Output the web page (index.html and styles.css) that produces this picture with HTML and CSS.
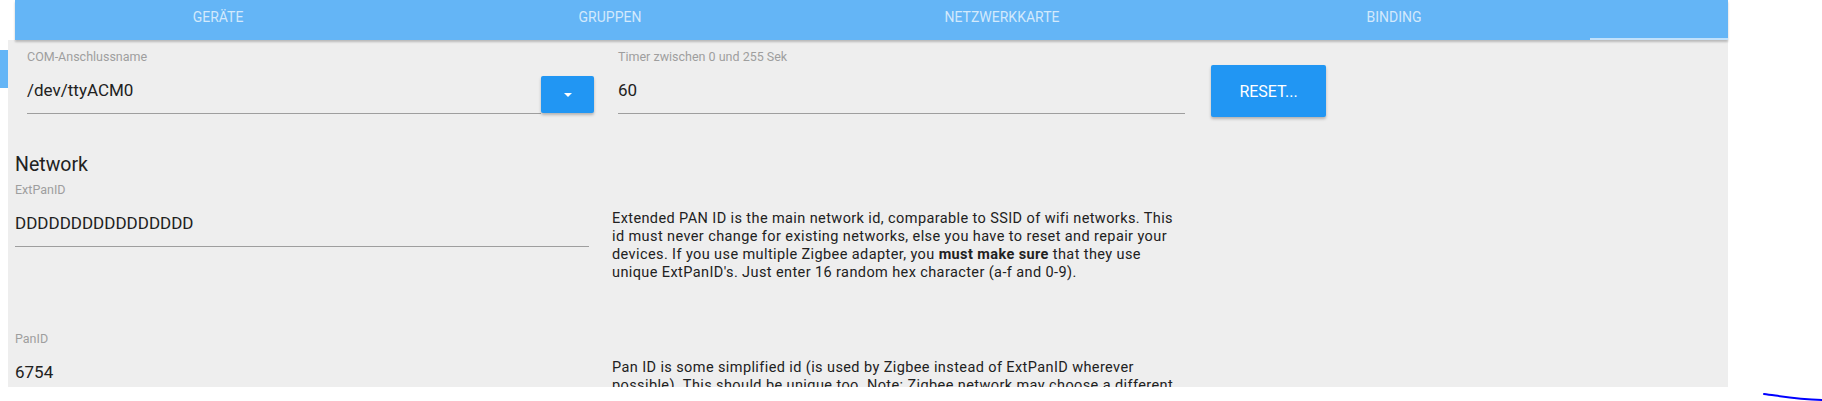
FILE: index.html
```html
<!DOCTYPE html>
<html lang="de">

<head>
    <meta charset="UTF-8">
    <meta name="viewport" content="width=device-width, initial-scale=1.0">
    <title>Zigbee Einstellungen</title>
    <link rel="stylesheet" href="styles.css">
</head>

<body>
    <div class="page">
        <div class="side">
            <div class="side-btn"></div>
        </div>
        <div class="main">
            <div class="tabs">
                <div class="tab">Geräte</div>
                <div class="tab">Gruppen</div>
                <div class="tab">Netzwerkkarte</div>
                <div class="tab">Binding</div>
                <div class="tab active" title="Einstellungen"></div>
            </div>

            <div class="panel">
                <!-- port / timer / reset -->
                <div class="top-row">
                    <div class="port">
                        <div class="field port-field">
                            <div class="field-label">COM-Anschlussname</div>
                            <div class="field-value">/dev/ttyACM0</div>
                        </div>
                        <button class="drop-btn"><span class="caret"></span></button>
                    </div>
                    <div class="field timer-field">
                        <div class="field-label">Timer zwischen 0 und 255 Sek</div>
                        <div class="field-value">60</div>
                    </div>
                    <div>
                        <button class="reset-btn">Reset...</button>
                    </div>
                </div>

                <h3 class="section-title">Network</h3>

                <div class="net-row">
                    <div class="field net-field">
                        <div class="field-label">ExtPanID</div>
                        <div class="field-value">DDDDDDDDDDDDDDDD</div>
                    </div>
                    <div class="desc">
                        Extended PAN ID is the main network id, comparable to SSID of wifi networks. This<br>
                        id must never change for existing networks, else you have to reset and repair your<br>
                        devices. If you use multiple Zigbee adapter, you <b>must make sure</b> that they use<br>
                        unique ExtPanID's. Just enter 16 random hex character (a-f and 0-9).
                    </div>
                </div>

                <div class="net-row">
                    <div class="field net-field">
                        <div class="field-label">PanID</div>
                        <div class="field-value">6754</div>
                    </div>
                    <div class="desc">
                        Pan ID is some simplified id (is used by Zigbee instead of ExtPanID wherever<br>
                        possible). This should be unique too. Note: Zigbee network may choose a different<br>
                        PanID if it detects a conflict with another network.
                    </div>
                </div>
            </div>
        </div>
    </div>

    <svg class="scribble" width="62" height="12" viewBox="0 0 62 12">
        <path d="M4 4 C 20 6, 34 9, 62 10" fill="none" stroke="#0000ff" stroke-width="2" stroke-linecap="round" />
    </svg>
</body>

</html>
```

FILE: styles.css
```css
body {
    font-family: Roboto, "Liberation Sans", sans-serif;
    margin: 0;
    padding: 0;
    background-color: #fff;
    height: 401px;
    overflow: hidden;
}

.page {
    display: flex;
    width: 1728px;
}

.side {
    width: 8px;
    padding-top: 50px;
}

.side-btn {
    height: 38px;
    background-color: #64b5f6;
}

.main {
    width: 1720px;
}

.tabs {
    position: relative;
    z-index: 1;
    display: flex;
    height: 40px;
    margin-left: 7px;
    padding-left: 7px;
    background-color: #64b5f6;
    box-shadow: 0 2px 2px rgba(0, 0, 0, 0.22);
    overflow: hidden;
}

.tab {
    flex: 0 0 392px;
    box-sizing: border-box;
    height: 40px;
    padding-top: 9px;
    text-align: center;
    text-transform: uppercase;
    font-size: 14px;
    line-height: 17px;
    color: rgba(255, 255, 255, 0.72);
}

.tab.active {
    border-bottom: 2px solid rgba(255, 255, 255, 0.6);
}

.panel {
    height: 347px;
    box-sizing: border-box;
    padding: 10px 0 0 7px;
    background-color: #eeeeee;
    overflow: hidden;
}

.top-row {
    display: grid;
    grid-template-columns: 591px 593px auto;
    padding-left: 12px;
}

.port {
    display: flex;
}

.field-label {
    font-size: 12.5px;
    line-height: 14px;
    color: #9e9e9e;
}

.field-value {
    font-size: 17px;
    line-height: 24px;
    padding: 14px 0 11px;
    border-bottom: 1px solid #9e9e9e;
    color: #212121;
}

.port-field {
    width: 514px;
}

.timer-field {
    width: 567px;
}

.drop-btn {
    align-self: flex-end;
    width: 53px;
    height: 37px;
    margin-bottom: 4px;
    border: none;
    border-radius: 2px;
    background-color: #2196f3;
    box-shadow: 0 2px 3px rgba(0, 0, 0, 0.25);
    display: flex;
    align-items: center;
    justify-content: center;
}

.caret {
    width: 0;
    height: 0;
    border-left: 4px solid transparent;
    border-right: 4px solid transparent;
    border-top: 4px solid #fff;
}

.reset-btn {
    margin-top: 15px;
    width: 115px;
    height: 52px;
    border: none;
    border-radius: 2px;
    background-color: #2196f3;
    box-shadow: 0 2px 3px rgba(0, 0, 0, 0.25);
    color: #fff;
    font-family: Roboto, "Liberation Sans", sans-serif;
    font-size: 16px;
    text-transform: uppercase;
}

.section-title {
    margin: 36px 0 6px;
    font-size: 19.5px;
    line-height: 24px;
    font-weight: normal;
    color: #212121;
}

.net-row {
    display: grid;
    grid-template-columns: 597px auto;
    padding-bottom: 50px;
}

.net-field {
    width: 574px;
    align-self: start;
}

.desc {
    margin-top: 27px;
    font-size: 14.5px;
    line-height: 18px;
    letter-spacing: 0.4px;
    color: #212121;
}

.scribble {
    position: absolute;
    left: 1760px;
    top: 390px;
}
```
